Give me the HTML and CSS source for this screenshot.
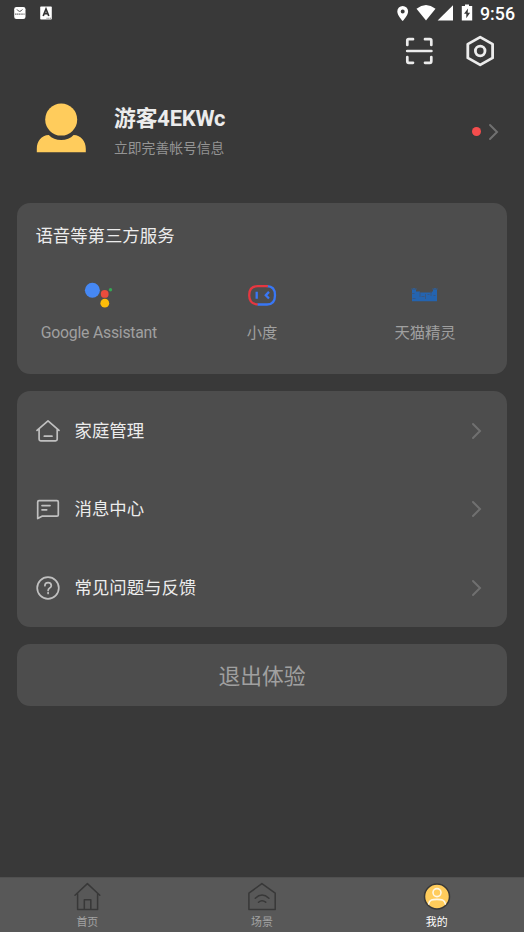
FILE: index.html
```html
<!DOCTYPE html>
<html lang="zh-CN">
<head>
<meta charset="utf-8">
<meta name="viewport" content="width=device-width">
<title>我的</title>
<link rel="stylesheet" href="styles.css">
</head>
<body>
<header class="status">
  <svg class="status-apps" width="40" height="28" viewBox="14 0 40 28">
    <rect x="14.2" y="7" width="11.3" height="12" rx="2.2" fill="#fff"/>
    <path d="M17 9.4q2.7 4 5.4 0" fill="none" stroke="#555" stroke-width="1"/>
    <path d="M15 14.2h9.6" stroke="#777" stroke-width="1.3" stroke-dasharray="1.4 .4"/>
    <rect x="40.2" y="6.6" width="11.6" height="13" rx=".8" fill="#fff"/>
    <path d="M43.2 16l2.8-7 2.8 7M44.2 13.7h3.6" fill="none" stroke="#333" stroke-width="1.7"/>
    <path d="M46.5 18.3h4.7" stroke="#888" stroke-width="1.1" stroke-dasharray="1.2 .5"/>
  </svg>
  <svg width="80" height="28" viewBox="396 0 80 28" fill="#fff">
    <path fill-rule="evenodd" d="M402.7 6a5.4 5.4 0 0 0-5.4 5.4c0 4 5.4 9.6 5.4 9.6s5.4-5.6 5.4-9.6a5.4 5.4 0 0 0-5.4-5.4zm0 3.4a2 2 0 1 1 0 4 2 2 0 0 1 0-4z"/>
    <path d="M416.5 8.7q9.5-7.2 19 0L426 20.5z"/>
    <path d="M453 5.2v15.4h-15.4z"/>
    <path fill-rule="evenodd" d="M465 4.5h4v1.6h3.2v14.5h-10.4V6.1h3.2zM468 8.5l-4 5.3h2.3v4.4l3.8-5.5h-2.4z"/>
  </svg>
  <time class="clock">9:56</time>
</header>

<nav class="toolbar">
  <svg width="28" height="32" viewBox="405 35 28 32" fill="none" stroke="#ececec" stroke-width="2.7" stroke-linecap="round" stroke-linejoin="round">
    <path d="M407.3 45v-4.3q0-1.5 1.5-1.5h4.2M425 39.2h4.8q1.5 0 1.5 1.5V45M407.3 57v4.3q0 1.5 1.5 1.5h4.2M425 62.8h4.8q1.5 0 1.5-1.5V57M407.2 51h24.2"/>
  </svg>
  <svg width="30" height="32" viewBox="465.2 35 30 32" fill="none" stroke="#ececec" stroke-width="2.8" stroke-linejoin="round">
    <path d="M480.4 37.1l12.4 7v13.8l-12.4 7-12.4-7V44.1z"/>
    <circle cx="480.4" cy="51" r="4.8"/>
  </svg>
</nav>

<section class="profile">
  <svg class="avatar" width="50" height="52" viewBox="36 102 50 52" fill="#ffcc5c">
    <circle cx="61.2" cy="119.6" r="16"/>
    <path d="M36.8 152.3v-3.5c0-7.500 4.500-13.500 12-13.800 3 3.300 7.500 5.100 12.400 5.100s9.400-1.800 12.400-5.100c7.500.3 12.200 6.300 12.200 13.800v3.500z"/>
  </svg>
  <div class="who">
    <h1 class="name">游客4EKWc</h1>
    <p class="hint">立即完善帐号信息</p>
  </div>
  <i class="dot"></i>
  <svg class="arrow" width="12" height="18" viewBox="0 0 12 18"><path d="M2 2l7 7-7 7"/></svg>
</section>

<main class="content">
  <section class="card services">
    <h2 class="card-title">语音等第三方服务</h2>
    <div class="service-grid">
      <div class="service">
        <svg width="32" height="32" viewBox="83 279 32 32">
          <circle cx="92.4" cy="290.2" r="7.5" fill="#4688f4"/>
          <circle cx="104.7" cy="293.9" r="3.9" fill="#ea4c3d"/>
          <circle cx="104.8" cy="303.2" r="4.4" fill="#fdbd0a"/>
          <circle cx="110.5" cy="289.7" r="1.7" fill="#35a854"/>
        </svg>
        <span class="latin">Google Assistant</span>
      </div>
      <div class="service">
        <svg width="32" height="32" viewBox="246 279 32 32" fill="none" stroke-width="2.3" stroke-linecap="round">
          <path stroke="#3977f5" d="M267 286.2c6 0 8 3.5 8 9s-2 9.3-8 9.300h-9"/>
          <path stroke="#e53740" d="M267 286.2h-9.500c-5.500 0-8.300 3.500-8.300 9 0 5 2.500 8.500 7.500 9.200"/>
          <path stroke="#3977f5" stroke-linecap="butt" d="M256.700 291.800v6.900M269 291.900l-3.200 3.300 3.200 3.300"/>
        </svg>
        <span>小度</span>
      </div>
      <div class="service">
        <svg width="32" height="32" viewBox="409.500 279 32 32">
          <path fill="#2464b0" d="M412.500 289.500h4v2h4v1h12v-1h1v-2h4v11.700h-25z"/>
          <path fill="none" stroke="#2366b7" stroke-width="1" stroke-dasharray="1 1" d="M412 289h5M433 289h5M414.500 288v2M435.500 288v2"/>
          <path fill="none" stroke="#3c5478" stroke-width=".8" d="M412 293.500h3M413 298.500h3M420.500 292v5M426 294v5M431.500 291v5M422 296.500h3M428 294.500h2M434 295.500h2"/>
        </svg>
        <span>天猫精灵</span>
      </div>
    </div>
  </section>

  <ul class="card menu">
    <li class="row">
      <svg class="row-icon" width="26" height="26" viewBox="35 418 26 26">
        <path d="M37 430.4L48 420.900l11 9.500M39.100 429v10.200q0 1.600 1.600 1.600h14.900q1.600 0 1.600-1.600V429M44.300 436.200h7.700"/>
      </svg>
      <span>家庭管理</span>
      <svg class="arrow" width="12" height="18" viewBox="0 0 12 18"><path d="M2 2l7 7-7 7"/></svg>
    </li>
    <li class="row">
      <svg class="row-icon" width="26" height="26" viewBox="35 496.600 26 26">
        <path d="M37.700 519.200v-16.700q0-1.300 1.300-1.300h18q1.300 0 1.300 1.300v13q0 1.300-1.300 1.300H42zM42 506.200h8M42 510.400h4.700"/>
      </svg>
      <span>消息中心</span>
      <svg class="arrow" width="12" height="18" viewBox="0 0 12 18"><path d="M2 2l7 7-7 7"/></svg>
    </li>
    <li class="row">
      <svg class="row-icon" width="26" height="26" viewBox="35 575 26 26">
        <circle cx="48" cy="588" r="10.800"/>
        <path d="M44.900 585.700c0-4.200 6.400-4.200 6.400 0 0 2.100-3.200 2.300-3.200 4.800M48.100 592.600v.8"/>
      </svg>
      <span>常见问题与反馈</span>
      <svg class="arrow" width="12" height="18" viewBox="0 0 12 18"><path d="M2 2l7 7-7 7"/></svg>
    </li>
  </ul>

  <button class="card exit">退出体验</button>
</main>

<footer class="tabs">
  <a class="tab">
    <svg width="30" height="30" viewBox="72 882 30 30" fill="none" stroke="#383838" stroke-width="1.500" stroke-linejoin="round" stroke-linecap="round">
      <path d="M75 895.200l12.400-11.600 12.400 11.600M77.600 893v16.500h20V893M84.300 909v-9.300h6.500v9.300"/>
    </svg>
    <span>首页</span>
  </a>
  <a class="tab">
    <svg width="30" height="30" viewBox="247 882 30 30" fill="none" stroke="#383838" stroke-width="1.500" stroke-linejoin="round" stroke-linecap="round">
      <path d="M248.900 909.500v-16.300l13-9.600 13.300 9.600v16.300zM255.300 898.200q6.700-6.400 13.600 0M258.500 902.200q3.500-3 7.200 0"/>
    </svg>
    <span>场景</span>
  </a>
  <a class="tab active">
    <svg width="30" height="30" viewBox="421.700 882 30 30">
      <circle cx="436.700" cy="896.500" r="12.500" fill="#ffcc5c" stroke="#383838" stroke-width="1.500"/>
      <g fill="none" stroke="#fff7e3" stroke-width="1.600" stroke-linecap="round">
        <circle cx="436.700" cy="892.600" r="4"/>
        <path d="M428.300 904c.8-4.500 4-4.600 8.400-4.600s7.600.1 8.400 4.600"/>
      </g>
    </svg>
    <span>我的</span>
  </a>
</footer>
</body>
</html>
```

FILE: styles.css
```css
* {
  box-sizing: border-box;
  margin: 0;
  padding: 0;
}

body {
  display: flex;
  flex-direction: column;
  height: 932px;
  overflow: hidden;
  background: #393939;
  color: #ececec;
  font-family: Roboto, "Noto Sans CJK SC", sans-serif;
}

svg {
  display: block;
  flex: none;
}

.status {
  display: flex;
  height: 28px;
  padding: 0 9px 0 14px;
}

.status-apps {
  margin-right: auto;
}

.clock {
  width: 35px;
  margin-left: 4px;
  color: #fff;
  font-size: 17.8px;
  font-weight: 500;
  line-height: 28px;
  white-space: nowrap;
}

.toolbar {
  display: flex;
  justify-content: flex-end;
  gap: 32px;
  height: 46px;
  padding: 7px 29px 0 0;
}

.profile {
  display: flex;
  align-items: center;
  height: 115px;
  padding: 0 24px 0 36px;
}

.avatar {
  margin-top: -7px;
}

.who {
  flex: 1;
  margin: -2px 0 0 28px;
}

.name {
  font-size: 21.8px;
  font-weight: 700;
  letter-spacing: -0.15px;
  line-height: 30px;
}

.hint {
  margin-top: 4px;
  color: #949494;
  font-size: 13.8px;
  line-height: 20px;
}

.dot {
  width: 9px;
  height: 9px;
  margin-right: 7px;
  border-radius: 50%;
  background: #f44d4d;
}

.arrow path {
  fill: none;
  stroke: #707070;
  stroke-width: 2;
  stroke-linecap: round;
}

.content {
  display: flex;
  flex: 1;
  flex-direction: column;
  gap: 17.5px;
  padding: 14.2px 17.4px 0;
}

.card {
  border-radius: 13px;
  background: #4d4d4d;
}

.services {
  height: 170.5px;
  padding-top: 19.4px;
}

.card-title {
  padding-left: 18px;
  font-size: 17.4px;
  font-weight: 400;
  line-height: 26px;
}

.service-grid {
  display: grid;
  grid-template-columns: repeat(3, 1fr);
  margin-top: 30.6px;
}

.service {
  display: flex;
  flex-direction: column;
  align-items: center;
  gap: 11px;
  color: #a0a0a0;
  font-size: 15.3px;
  line-height: 23px;
}

.latin {
  margin-top: -1px;
  font-size: 15.8px;
  letter-spacing: -0.24px;
}

.menu {
  height: 235.5px;
  list-style: none;
}

.row {
  display: flex;
  align-items: center;
  height: 78.5px;
  padding: 1px 23.2px 0 17.6px;
  font-size: 17.4px;
}

.row span {
  flex: 1;
  margin: -3px 0 0 13.5px;
}

.row-icon {
  fill: none;
  stroke: #c0c0c0;
  stroke-width: 1.7;
  stroke-linecap: round;
  stroke-linejoin: round;
}

.exit {
  height: 61.5px;
  padding-bottom: 1px;
  border: 0;
  color: #a0a0a0;
  font: 21.8px Roboto, "Noto Sans CJK SC", sans-serif;
}

.tabs {
  display: grid;
  grid-template-columns: repeat(3, 1fr);
  height: 55px;
  padding-top: 4px;
  border-top: 1px solid #505050;
  background: #585858;
}

.tab {
  display: flex;
  flex-direction: column;
  align-items: center;
  color: #a3a3a3;
  font-size: 10.9px;
  line-height: 22px;
}

.active {
  color: #fff;
}
```
